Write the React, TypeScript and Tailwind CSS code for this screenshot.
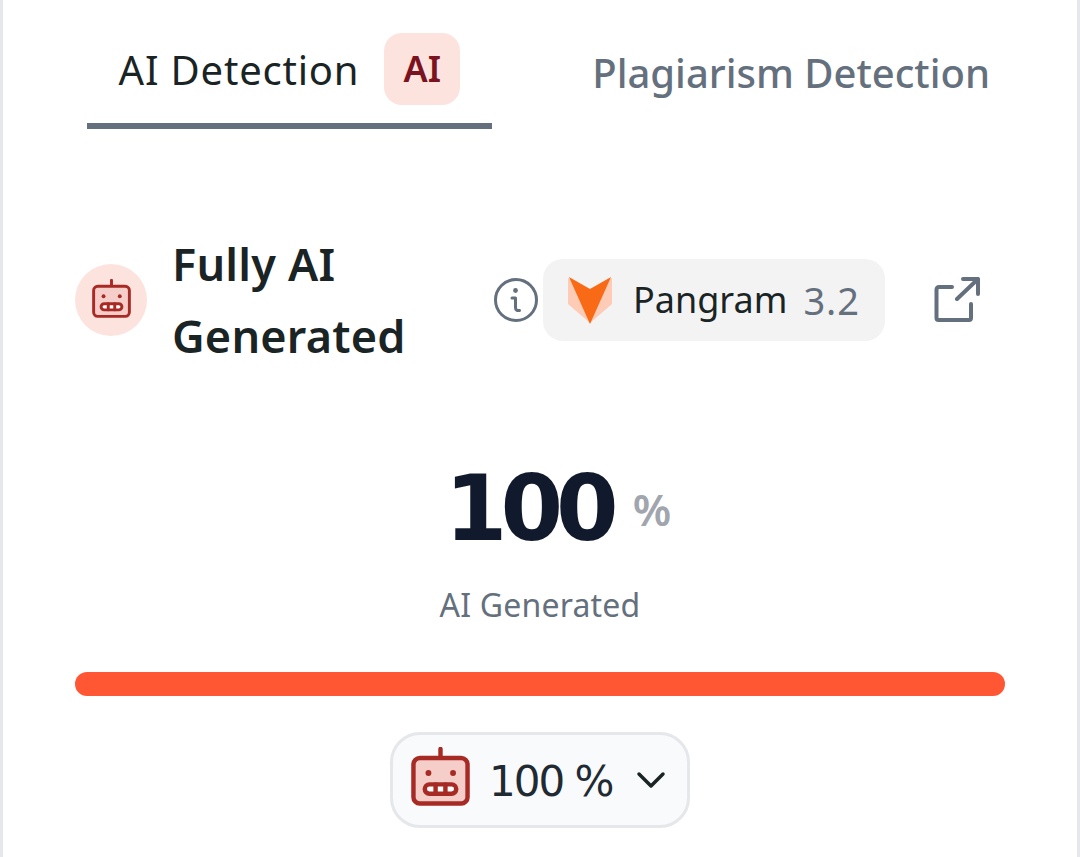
import { ChevronDown } from 'lucide-react';

function RobotIcon({ className }: { className?: string }) {
  return (
    <svg viewBox="0 0 24 24" fill="none" stroke="#a82a25" strokeWidth="1.8" strokeLinecap="round" strokeLinejoin="round" className={className}>
      <path d="M12 0.8V4.5" />
      <rect x="1" y="4.5" width="22" height="18.5" rx="2.6" fill="#f5cdc9" />
      <circle cx="7.1" cy="10.6" r="1.2" fill="#a82a25" stroke="none" />
      <circle cx="17.1" cy="10.6" r="1.2" fill="#a82a25" stroke="none" />
      <rect x="5.6" y="15.2" width="12.8" height="3.8" rx="1.9" fill="#fff" />
      <path d="M10 15.2v3.8M14 15.2v3.8" />
    </svg>
  );
}

function FoxLogo() {
  return (
    <svg viewBox="0 0 44 47" className="h-[47px] w-[44px] shrink-0">
      <path d="M0 1 22 12 44 1V27L22 46 0 27Z" fill="#fdcbb6" />
      <path d="M1 0 22 12 43 0 22 47Z" fill="#f96a16" />
    </svg>
  );
}

function InfoIcon() {
  return (
    <svg viewBox="0 0 44 44" fill="none" stroke="#64707d" strokeWidth="3" strokeLinecap="round" strokeLinejoin="round" className="h-11 w-11 shrink-0">
      <circle cx="22" cy="22" r="20.5" />
      <circle cx="21.5" cy="12.5" r="2.4" fill="#64707d" stroke="none" />
      <path d="M18 20H21.5V29.5Q21.5 33 25.5 32.5" />
    </svg>
  );
}

function ExternalIcon() {
  return (
    <svg viewBox="0 0 46 46" fill="none" stroke="#64707d" strokeWidth="4" strokeLinecap="round" strokeLinejoin="round" className="ml-[49px] h-[46px] w-[46px] shrink-0">
      <path d="M18 10H5A2.5 2.5 0 0 0 2.5 12.5V41A2 2 0 0 0 4.5 43H35A2 2 0 0 0 37 41V27" />
      <path d="M23 22 44 2M29 2H44V17" />
    </svg>
  );
}

export default function App() {
  return (
    <div className="h-[857px] w-[1080px] overflow-hidden border-x-[3px] border-[#e5e7eb] bg-white px-[72px] font-['Noto_Sans',sans-serif]">
      {/* Tabs */}
      <div className="flex items-end pl-3">
        <div className="flex h-[129px] w-[405px] items-center justify-center gap-[25px] border-b-[6px] border-[#64707d] pt-[15px]">
          <span className="mt-[2px] text-[40px] leading-none tracking-[0.8px] text-[#1a2424]">AI Detection</span>
          <span className="flex h-[72px] w-[76px] items-center justify-center rounded-[18px] bg-[#fde3de] text-[36px] font-semibold text-[#7a1220]">AI</span>
        </div>
        <div className="flex h-[129px] flex-1 items-center justify-end pr-[15px] pt-[16px]">
          <span className="text-[40px] font-medium leading-none text-[#64707d]">Plagiarism Detection</span>
        </div>
      </div>

      {/* Detector result */}
      <div className="mt-[130px] flex h-[82px] items-center">
        <div className="flex h-[72px] w-[72px] shrink-0 items-center justify-center rounded-full bg-[#fde3de]">
          <RobotIcon className="mb-[3px] h-[39px] w-[39px]" />
        </div>
        <div className="ml-[25px] w-[322px] text-[45px] font-semibold leading-[72px] tracking-[0.2px] text-[#1a2424]">
          <div>Fully AI</div>
          <div>Generated</div>
        </div>
        <InfoIcon />
        <div className="ml-[5px] flex h-[82px] w-[342px] shrink-0 items-center rounded-[20px] bg-[#f3f3f4] pl-[25px]">
          <FoxLogo />
          <span className="ml-[21px] text-[36px] leading-none text-[#1a2424]">Pangram</span>
          <span className="ml-[16px] text-[38px] leading-none tracking-[1px] text-[#64707d]">3.2</span>
        </div>
        <ExternalIcon />
      </div>

      {/* Score */}
      <div className="mt-[120px] flex h-[96px] items-center justify-center pl-[36px]">
        <span className="font-['DejaVu_Sans',sans-serif] text-[90px] font-bold leading-none tracking-[-7px] text-[#111a2c]">100</span>
        <span className="ml-[21px] text-[44px] font-semibold leading-none text-[#a0a5ae]">%</span>
      </div>
      <div className="mt-[26px] text-center text-[32px] leading-[44px] tracking-[0.2px] text-[#64707d]">AI Generated</div>

      <div className="mt-[45px] h-6 w-full rounded-full bg-[#ff5733]" />

      {/* Breakdown pill */}
      <div className="mt-9 flex justify-center">
        <div className="flex h-24 w-[300px] items-center rounded-[30px] border-[3px] border-[#e5e7eb] bg-[#f9fafb] pl-[18px]">
          <RobotIcon className="mb-[7px] h-[59px] w-[59px] shrink-0" />
          <span className="ml-[19px] mt-[3px] font-['DejaVu_Sans',sans-serif] text-[42px] leading-none tracking-[-2px] text-[#1f2a33]">100 %</span>
          <ChevronDown size={48} strokeWidth={1.75} className="ml-[15px] shrink-0 text-[#1a2424]" />
        </div>
      </div>
    </div>
  );
}
